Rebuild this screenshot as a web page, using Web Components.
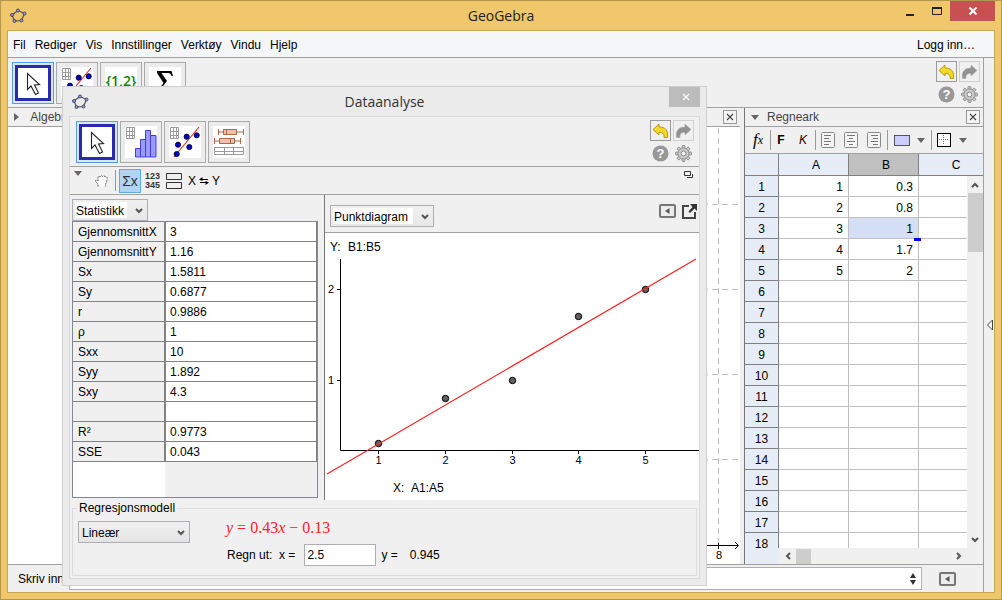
<!DOCTYPE html>
<html lang="nb">
<head>
<meta charset="utf-8">
<title>GeoGebra</title>
<style>
  html, body { margin: 0; height: 100%; }
  body { font: 12px/14px "Liberation Sans", Arial, sans-serif; color: #000; overflow: hidden; }
</style>
</head>
<body>
<gg-app></gg-app>
<script>
const BASE = `
  :host, *, *::before, *::after { box-sizing: border-box; }
  button { font: inherit; color: inherit; background: none; border: 0; padding: 0; margin: 0; display: inline-flex; align-items: center; justify-content: center; }
  svg { display: block; }
`;

function define(name, css, html, setup) {
  const tpl = document.createElement('template');
  tpl.innerHTML = `<style>${BASE}${css}</style>${html}`;
  customElements.define(name, class extends HTMLElement {
    constructor() {
      super();
      this.attachShadow({ mode: 'open' }).append(tpl.content.cloneNode(true));
    }
    connectedCallback() { if (setup) setup(this, this.shadowRoot); }
  });
}

/* ---------- icons: [width, height, svg body] ---------- */
const GRID = '<path d="M1.5 1.5h8v11h-8zM4.5 1.5v11M7.5 1.5v11M1.5 5.5h8M1.5 9.5h8" fill="none" stroke="#999"/>';
const DOT = (x, y) => `<circle cx="${x}" cy="${y}" r="2.6" fill="#0000d8" stroke="#000" stroke-width=".8"/>`;
const TEETH = [0, 45, 90, 135, 180, 225, 270, 315].map(a => `<rect x="7" y="0.5" width="3" height="4" rx="1" transform="rotate(${a} 8.5 8.5)"/>`).join('');
const ICONS = {
  logo: [17, 16, '<path d="M8 2.5L14.5 5.5L11.5 12.5L4.5 13L2 7Z" fill="none" stroke="#555" stroke-width="1.2"/><g fill="#9a9af0" stroke="#334" stroke-width=".8"><circle cx="8" cy="2.5" r="1.5"/><circle cx="14.5" cy="5.5" r="1.5"/><circle cx="11.5" cy="12.5" r="1.5"/><circle cx="4.5" cy="13" r="1.5"/><circle cx="2" cy="7" r="1.5"/></g>'],
  arrow: [30, 30, '<path d="M9.500 5.500V21.500L13 18L17.500 26.500L20.500 25L16.500 17L21.500 16.500Z" fill="#fff" stroke="#222" stroke-width="1.1"/>'],
  histogram: [32, 32, GRID + '<path d="M10.500 31V22.500H15.500V13.500H20.500V4.500H25.500V9.500H31V31ZM15.500 22V31M20.500 13V31M25.500 9V31" fill="#9a9aff" stroke="#4040e0"/>'],
  regression: [32, 32, GRID + '<path d="M5 31L30 1" stroke="#f02020" stroke-width="1.1"/>' + DOT(17.7, 10.7) + DOT(27.7, 9.3) + DOT(9, 18.7) + DOT(20.3, 21) + DOT(7.7, 28)],
  boxplot: [32, 32, '<g fill="#f0c0a8" stroke="#b06840"><path d="M5.500 3v6M30.500 3v6M5.500 6h5M24 6h6.500M1.500 12v6M27.500 12v6M1.500 15h5M20 15h7"/><path d="M10.500 3.500h13v5h-13zM13.500 3.500v5M6.500 12.500h15v5h-15zM17.500 12.500v5"/></g><path d="M1.500 21.500h29v7h-29zM1.500 25.500h29M11.500 21.500v7M20.500 21.500v7" fill="#fff" stroke="#999"/>'],
  list: [32, 32, '<text x="16" y="19" text-anchor="middle" font-family="Open Sans" font-size="14" font-weight="600" fill="#0b870b">{1,2}</text>'],
  sum: [32, 32, '<path d="M8 4H22.500L24 9H22.500C22 7 21 6 19 6H12.500L18 14L11 23H20C22 23 23 22 24 20L22.500 27H7.500V25.500L14.500 16L8 6Z" fill="#000"/>'],
  undo: [17, 16, '<path d="M1 6.500L7 1V4C13 4 16.500 7 15.500 14.500H12C12.500 11 10.500 9 7 9.500V12Z" fill="#f3d827" stroke="#b89a10"/>'],
  redo: [17, 16, '<path d="M16 6.500L10 1V4C4 4 .5 7 1.500 14.500H5C4.500 11 6.500 9 10 9.500V12Z" fill="#929292" stroke="#aaa" stroke-width=".6"/>'],
  help: [17, 17, '<circle cx="8.500" cy="8.500" r="8" fill="#989898"/><text x="8.500" y="13" text-anchor="middle" font-family="Liberation Sans" font-weight="bold" font-size="13" fill="#fff">?</text>'],
  gear: [17, 17, `<g fill="#c4c4c4" stroke="#8c8c8c" stroke-width=".9">${TEETH}<circle cx="8.500" cy="8.500" r="5.500"/></g><circle cx="8.500" cy="8.500" r="4.800" fill="#c8c8c8"/><circle cx="8.500" cy="8.500" r="2.400" fill="#f4f4f4" stroke="#8c8c8c"/>`],
  close: [8, 8, '<path d="M1 1L7 7M7 1L1 7" stroke="currentColor" stroke-width="1.1"/>'],
  closeBold: [10, 10, '<path d="M1.500 1.500L8.500 8.500M8.500 1.500L1.500 8.500" stroke="currentColor" stroke-width="2"/>'],
  minimize: [8, 8, '<path d="M0 5h8v2H0z" fill="#222"/>'],
  maximize: [10, 8, '<path d="M.5 1v6.500h9V1" fill="none" stroke="#222"/><path d="M0 0h10v2H0z" fill="#222"/>'],
  right: [5, 8, '<path d="M0 0L5 4L0 8Z" fill="#666"/>'],
  down: [8, 5, '<path d="M0 0H8L4 5Z" fill="#666"/>'],
  hand: [15, 14, '<path d="M4 12.500V10L1.500 7.500Q1 6 3 6.500L4 7V3.500Q4.500 1.500 6 3Q7.500 .5 8.500 2.500Q10.500 .5 11 3Q13.500 2 13 5.500Q13 8 11.500 10V12.500" fill="#fff" stroke="#555" stroke-dasharray="2 1"/>'],
  rows: [16, 16, '<path d="M.5 .5h15v6H.5zM.5 9.500h15v6H.5z" fill="none" stroke="#333"/>'],
  swap: [10, 8, '<path d="M2 2.500H9M1 5.500H8" stroke="#000"/><path d="M0 2.500L3.500 0V4ZM10 5.500L6.500 4V8Z"/>'],
  windows: [10, 8, '<path d="M.5 .5h6v4h-6zM3 6.500H8.500V3" fill="none" stroke="#333"/>'],
  toggle: [17, 14, '<rect x="1" y="1" width="15" height="12" rx="1" fill="#ececec" stroke="#777" stroke-width="2"/><path d="M10.500 4V10L6 7Z" fill="#555"/>'],
  export: [15, 15, '<path d="M7 2H1V14H13V8" fill="none" stroke="#444" stroke-width="2"/><path d="M8 0H15V7L12.500 4.500L8 9L6.500 7.500L10.500 3Z" fill="#333"/>'],
  alignL: [14, 16, '<rect x=".5" y=".5" width="13" height="15" rx="1" fill="#f4f4f4" stroke="#888"/><path d="M3 3.500h7M3 6.500h5M3 9.500h7M3 12.500h5" stroke="#777"/>'],
  alignC: [14, 16, '<rect x=".5" y=".5" width="13" height="15" rx="1" fill="#f4f4f4" stroke="#888"/><path d="M3 3.500h8M5 6.500h4M3 9.500h8M5 12.500h4" stroke="#777"/>'],
  alignR: [14, 16, '<rect x=".5" y=".5" width="13" height="15" rx="1" fill="#f4f4f4" stroke="#888"/><path d="M4 3.500h7M6 6.500h5M4 9.500h7M6 12.500h5" stroke="#777"/>'],
  fill: [16, 11, '<rect x=".5" y=".5" width="15" height="10" fill="#ccf" stroke="#555"/>'],
  borders: [14, 14, '<rect x=".5" y=".5" width="13" height="13" fill="#fff" stroke="#000" stroke-width="1"/><path d="M6.500 2v10M2 6.500h10" stroke="#777" stroke-dasharray="1 1"/>'],
  spinner: [6, 12, '<path d="M0 5L3 0L6 5ZM0 7L3 12L6 7Z" fill="#333"/>'],
  chevron: [8, 6, '<path d="M1 1L4 4L7 1" fill="none" stroke="#555" stroke-width="2"/>'],
  chevronUp: [8, 6, '<path d="M1 5L4 2L7 5" fill="none" stroke="#555" stroke-width="2"/>'],
  chevronLeft: [6, 8, '<path d="M5 1L2 4L5 7" fill="none" stroke="#555" stroke-width="2"/>'],
  chevronRight: [6, 8, '<path d="M1 1L4 4L1 7" fill="none" stroke="#555" stroke-width="2"/>'],
  perspective: [6, 12, '<path d="M5.500 1V11L.5 6Z" fill="#fff" stroke="#444"/>']
};
define('gg-icon', ':host { display: block; flex: none; }', '<div id="box"></div>', (el, root) => {
  const [w, h, body] = ICONS[el.getAttribute('name')];
  root.getElementById('box').innerHTML = `<svg width="${w}" height="${h}" viewBox="0 0 ${w} ${h}" aria-hidden="true">${body}</svg>`;
});

/* ---------- large tool button ---------- */
define('gg-tool', `
  :host { display: block; flex: none; }
  button { width: 42px; height: 42px; border: 1px solid #aaa; background: #ececec; }
  span { display: grid; place-items: center; width: 32px; height: 32px; background: #fff; }
  :host([selected]) button { border-color: #569de5; background: #d3e8fa; }
  :host([selected]) span { width: 36px; height: 36px; border: 3px solid #2a2aaa; }
`, '<button type="button"><span><slot></slot></span></button>',
  (el, root) => root.querySelector('button').setAttribute('aria-label', el.getAttribute('label')));

/* ---------- undo / redo / help / settings ---------- */
define('gg-actions', `
  :host { display: grid; grid-template-columns: 21px 21px; grid-auto-rows: 21px; gap: 2px; flex: none; }
  .u { border: 1px solid #999; }
  .r { border: 1px solid #d0d0d0; }
`, `
  <button class="u" type="button" aria-label="Angre"><gg-icon name="undo"></gg-icon></button>
  <button class="r" type="button" aria-label="Gjør om"><gg-icon name="redo"></gg-icon></button>
  <button type="button" aria-label="Hjelp"><gg-icon name="help"></gg-icon></button>
  <button type="button" aria-label="Innstillinger"><gg-icon name="gear"></gg-icon></button>
`);

/* ---------- menu bar ---------- */
define('gg-menu', `
  :host { display: block; background: #f5f6f7; border-bottom: 1px solid #a0a0a0; flex: none; }
  nav { display: flex; align-items: center; gap: 9px; height: 26px; padding: 2px 19px 0 5px; }
  .login { margin-left: auto; }
`, `<nav>
  <button type="button">Fil</button><button type="button">Rediger</button><button type="button">Vis</button>
  <button type="button">Innstillinger</button><button type="button">Verktøy</button>
  <button type="button">Vindu</button><button type="button">Hjelp</button>
  <button type="button" class="login">Logg inn…</button>
</nav>`);

/* ---------- view panel with a header strip ---------- */
define('gg-panel', `
  :host { display: flex; flex-direction: column; min-width: 0; min-height: 0; }
  header { display: flex; align-items: center; height: 19px; padding: 0 3px 0 6px; gap: 8px; border-bottom: 1px solid #a0a0a0; color: #444; flex: none; }
  .x { width: 14px; height: 14px; margin-left: auto; border: 1px solid #999; background: #f4f4f4; }
  .body { flex: 1; min-height: 0; display: flex; flex-direction: column; background: #fff; overflow: hidden; }
`, `<header><slot name="mark"></slot><slot name="title"></slot><button class="x" type="button" aria-label="Lukk"><gg-icon name="close"></gg-icon></button></header><div class="body"><slot></slot></div>`);

/* ---------- graphics view ---------- */
define('gg-graphics', `
  :host { display: flex; justify-content: flex-end; height: 100%; overflow: hidden; }
  svg { flex: none; }
`, `<svg width="600" height="437" viewBox="-560 0 600 437" font-family="Liberation Sans" font-size="11">
  <g stroke="#c0c0c0" stroke-dasharray="6 4"><path d="M18.500 1V420"/><path d="M38 77.500H-560M38 162.500H-560M38 247.500H-560M38 332.500H-560"/></g>
  <path d="M-560 418.500H38M18.500 416V422M35 415L38.500 418.500L35 422" fill="none" stroke="#000"/>
  <text x="19" y="432" text-anchor="middle">8</text>
</svg>`);

/* ---------- spreadsheet ---------- */
define('gg-sheet', `
  :host { display: flex; flex-direction: column; flex: 1; min-height: 0; background: #f0f0f0; }
  .bar { display: flex; align-items: center; height: 27px; border-bottom: 1px solid #a0a0a0; padding-left: 8px; flex: none; }
  .bar > * { flex: none; }
  .sep { width: 1px; height: 20px; background: #999; }
  .gap { margin-left: 2px; }
  .fx { width: 17px; font: italic 17px/20px "Liberation Serif", serif; justify-content: flex-start; }
  .fx small { font-size: 12px; }
  .b { font-weight: bold; width: 20px; } .i { font-style: italic; width: 24px; }
  .a { width: 23px; } .tri { width: 16px; margin-right: 2px; }
  .grid { flex: 1; min-height: 0; display: grid; grid-template-columns: 1fr 16px; grid-template-rows: 1fr 16px; position: relative; }
  .clip { overflow: hidden; grid-column: 1 / 3; grid-row: 1; min-height: 0; }
  table { border-collapse: separate; border-spacing: 0; table-layout: fixed; width: 244px; background: #fff; }
  th, td { height: 21px; padding: 1px 0 0; border-right: 1px solid #c0c0c0; border-bottom: 1px solid #c0c0c0; font-weight: normal; line-height: 14px; }
  td { text-align: right; padding-right: 5px; }
  th { background: #e6edf7; border-color: #808080; text-align: center; }
  thead th { height: 22px; padding: 0 0 0 5px; }
  thead th.on { background: #c0c0c0; }
  td.on { background: #d4def4; position: relative; }
  td.on::after { content: ""; position: absolute; right: -3px; bottom: -3px; width: 7px; height: 3px; background: #00f; z-index: 1; }
  .v { grid-column: 2; grid-row: 1; margin-top: 22px; background: #f0f0f0; display: flex; flex-direction: column; align-items: center; position: relative; z-index: 2; }
  .v button, .h button { width: 17px; height: 17px; flex: none; }
  .v i { width: 15px; height: 59px; background: #cdcdcd; }
  .v button:last-child { margin-top: auto; }
  .h { grid-column: 1 / 3; grid-row: 2; display: flex; align-items: center; padding-right: 16px; }
  .h b { width: 34px; height: 16px; background: #e6edf7; flex: none; }
  .h i { width: 15px; height: 15px; background: #cdcdcd; }
  .h button:last-child { margin-left: auto; }
`, `<div class="bar">
    <button class="fx" type="button" aria-label="Formellinje">f<small>x</small></button><span class="sep"></span>
    <button class="b" type="button">F</button><button class="i" type="button">K</button><span class="sep"></span>
    <button class="a" type="button" aria-label="Venstrejuster"><gg-icon name="alignL"></gg-icon></button>
    <button class="a" type="button" aria-label="Midtstill"><gg-icon name="alignC"></gg-icon></button>
    <button class="a" type="button" aria-label="Høyrejuster"><gg-icon name="alignR"></gg-icon></button><span class="sep gap"></span>
    <button class="a gap" type="button" aria-label="Bakgrunnsfarge"><gg-icon name="fill"></gg-icon></button><button class="tri" type="button" aria-label="Velg farge"><gg-icon name="down"></gg-icon></button><span class="sep"></span>
    <button class="a" type="button" aria-label="Kantlinjer"><gg-icon name="borders"></gg-icon></button><button class="tri" type="button" aria-label="Velg kantlinje"><gg-icon name="down"></gg-icon></button>
  </div>
  <div class="grid">
    <div class="clip"><table><colgroup><col style="width:34px"><col style="width:70px"><col style="width:70px"><col style="width:70px"></colgroup>
      <thead><tr><th></th><th scope="col">A</th><th scope="col" class="on">B</th><th scope="col">C</th></tr></thead><tbody></tbody></table></div>
    <div class="v"><button type="button" aria-label="Opp"><gg-icon name="chevronUp"></gg-icon></button><i></i><button type="button" aria-label="Ned"><gg-icon name="chevron"></gg-icon></button></div>
    <div class="h"><b></b><button type="button" aria-label="Venstre"><gg-icon name="chevronLeft"></gg-icon></button><i></i><button type="button" aria-label="Høyre"><gg-icon name="chevronRight"></gg-icon></button></div>
  </div>`, (el, root) => {
  const ys = ['0.3', '0.8', '1', '1.7', '2'];
  root.querySelector('tbody').innerHTML = Array.from({ length: 18 }, (_, i) =>
    `<tr><th scope="row">${i + 1}</th><td>${i < 5 ? i + 1 : ''}</td><td${i === 2 ? ' class="on"' : ''}>${ys[i] || ''}</td><td></td></tr>`).join('');
});

/* ---------- drop-down ---------- */
define('gg-select', `
  :host { display: block; flex: none; position: relative; height: 22px; }
  select { appearance: none; width: 100%; height: 22px; margin: 0; padding: 1px 20px 0 3px; border: 1px solid #adadb3; border-radius: 0; font: inherit; color: #000; background: linear-gradient(#f0f0f0, #e4e4e4); }
  :host([editor]) select { background: linear-gradient(#fff, #fff) 2px 2px / calc(100% - 22px) 16px no-repeat, linear-gradient(#f0f0f0, #e8e8e8); }
  gg-icon { position: absolute; right: 5px; top: 9px; pointer-events: none; }
`, '<select></select><gg-icon name="chevron"></gg-icon>', (el, root) => {
  const s = root.querySelector('select');
  s.setAttribute('aria-label', el.getAttribute('label'));
  s.innerHTML = `<option>${el.getAttribute('value')}</option>`;
});

/* ---------- statistics table ---------- */
define('gg-stats', `
  :host { display: block; flex: 1; min-height: 0; overflow: hidden; border: 1px solid #828790; background: linear-gradient(90deg, #fff 92px, #f0f0f0 0); }
  table { border-collapse: separate; border-spacing: 0; table-layout: fixed; width: 100%; }
  th, td { height: 20px; padding: 0 0 0 5px; font-weight: normal; text-align: left; border: 0 solid #828282; border-bottom-width: 1px; border-right-width: 1px; white-space: nowrap; }
  th { width: 92px; background: #f0f0f0; }
  td { padding-left: 4px; background: #fff; border-left-width: 1px; }
`, '<table><tbody></tbody></table>', (el, root) => {
  root.querySelector('tbody').innerHTML = [['GjennomsnittX', '3'], ['GjennomsnittY', '1.16'], ['Sx', '1.5811'], ['Sy', '0.6877'], ['r', '0.9886'], ['ρ', '1'], ['Sxx', '10'], ['Syy', '1.892'], ['Sxy', '4.3'], ['', ''], ['R²', '0.9773'], ['SSE', '0.043']]
    .map(([k, v]) => `<tr><th scope="row">${k}</th><td>${v}</td></tr>`).join('');
});

/* ---------- scatter plot ---------- */
define('gg-scatter', ':host { display: block; flex: 1; min-height: 0; background: #fff; overflow: hidden; }', '<div id="plot"></div>', (el, root) => {
  const xs = [53.5, 120.5, 187.5, 253.5, 320.5];
  const ys = [210.5, 165.5, 147.5, 83.5, 56.5];
  root.getElementById('plot').innerHTML = `<svg width="374" height="267" viewBox="0 0 374 267" font-family="Liberation Sans" font-size="11">
    <path d="M15.500 26V217.500H374M12 56.500h3M12 147.500h3${xs.map(x => `M${x} 218v3`).join('')}" fill="none" stroke="#000"/>
    ${xs.map((x, i) => `<circle cx="${x}" cy="${ys[i]}" r="3.200" fill="#606060" stroke="#000"/>`).join('')}
    <path d="M2 241L371 26" stroke="#ff2020" stroke-width="1.200"/>
    ${xs.map((x, i) => `<text x="${x}" y="231" text-anchor="middle">${i + 1}</text>`).join('')}
    <text x="3" y="60">2</text><text x="3" y="151">1</text>
    <g font-size="12"><text x="5" y="18">Y:</text><text x="23" y="18">B1:B5</text><text x="68" y="259">X:</text><text x="86" y="259">A1:A5</text></g>
  </svg>`;
});

/* ---------- data analysis dialog ---------- */
define('gg-dialog', `
  :host { display: flex; flex-direction: column; background: #ebebeb; border: 1px solid #cfcfcf; padding: 0 6px 6px; }
  .title { display: grid; grid-template-columns: 31px 1fr 31px; height: 29px; align-items: center; flex: none; }
  .title gg-icon { margin-left: 3px; }
  h2 { margin: 0; text-align: center; font: 14px/20px "Open Sans", "Noto Sans", sans-serif; color: #333; }
  .x { align-self: start; width: 31px; height: 20px; background: #bcbcbc; color: #fff; }
  .content { flex: 1; min-height: 0; display: flex; flex-direction: column; border: 1px solid #dadada; background: #f0f0f0; }
  .tools { display: flex; gap: 2px; height: 50px; padding: 4px 5px 0 6px; border-bottom: 1px solid #a0a0a0; flex: none; }
  gg-actions { margin: -1px 0 0 auto; }
  .style { display: flex; align-items: center; height: 28px; border-bottom: 1px solid #a0a0a0; flex: none; padding: 0 5px 0 4px; }
  .style .top { align-self: flex-start; margin-top: 4px; }
  .hand { margin: 0 6px 0 12px; }
  .sep { width: 1px; height: 21px; background: #999; margin-right: 3px; }
  .sx { width: 22px; height: 24px; border: 1px solid #60a8e8; background: #b0d4f4; font-size: 14px; color: #333; margin-right: 4px; }
  .n { font: bold 9px/9px "Liberation Sans", sans-serif; color: #333; width: 15px; margin-right: 6px; }
  .xy { gap: 3px; margin-left: 6px; }
  .main { display: flex; flex: 1; min-height: 0; }
  .left { width: 248px; padding: 4px 0 2px 2px; display: flex; flex-direction: column; margin-right: 6px; flex: none; }
  .left gg-select { width: 76px; }
  .right { flex: 1; min-width: 0; display: flex; flex-direction: column; border-left: 1px solid #777; }
  .head { display: flex; align-items: flex-start; gap: 6px; height: 38px; padding: 10px 2px 0 5px; border-bottom: 1px solid #a0a0a0; flex: none; }
  .head gg-select { width: 104px; margin-right: auto; }
  .head button { margin-top: -1px; }
  fieldset { flex: none; min-width: 0; height: 75px; margin: 1px 2px 2px; padding: 0 5px; border: 1px solid #dcdcdc; }
  legend { margin-left: -1px; padding: 0 2px; height: 14px; }
  .reg { display: grid; grid-template-columns: 148px auto; justify-content: start; padding-top: 6px; }
  .reg gg-select { width: 112px; }
  .eq { font: 16px/14px "Liberation Serif", serif; color: #f22; height: 22px; }
  .calc { grid-column: 2; display: flex; align-items: center; padding-left: 1px; margin-top: 1px; }
  label { white-space: pre; }
  input { width: 72px; height: 22px; margin: 0 5px 0 9px; padding: 0 2px; border: 1px solid #adadb3; font: inherit; }
  output { margin-left: 12px; }
`, `<div class="title"><gg-icon name="logo"></gg-icon><h2>Dataanalyse</h2><button class="x" type="button" aria-label="Lukk"><gg-icon name="close"></gg-icon></button></div>
  <div class="content">
    <div class="tools">
      <gg-tool selected label="Flytt"><gg-icon name="arrow"></gg-icon></gg-tool>
      <gg-tool label="Analyse av en variabel"><gg-icon name="histogram"></gg-icon></gg-tool>
      <gg-tool label="Regresjonsanalyse"><gg-icon name="regression"></gg-icon></gg-tool>
      <gg-tool label="Analyse av flere variabler"><gg-icon name="boxplot"></gg-icon></gg-tool>
      <gg-actions></gg-actions>
    </div>
    <div class="style">
      <gg-icon class="top" name="down"></gg-icon><gg-icon class="hand" name="hand"></gg-icon><span class="sep"></span>
      <button class="sx" type="button">Σx</button><button class="n" type="button">123<br>345</button>
      <button type="button" aria-label="Vis to diagram"><gg-icon name="rows"></gg-icon></button>
      <button class="xy" type="button"><span>X</span><gg-icon name="swap"></gg-icon><span>Y</span></button>
      <gg-icon class="top" name="windows" style="margin-left:auto"></gg-icon>
    </div>
    <div class="main">
      <div class="left"><gg-select editor label="Tabell" value="Statistikk"></gg-select><gg-stats></gg-stats></div>
      <div class="right">
        <div class="head"><gg-select editor label="Diagram" value="Punktdiagram"></gg-select>
          <button type="button" aria-label="Vis innstillinger"><gg-icon name="toggle"></gg-icon></button>
          <button type="button" aria-label="Eksporter"><gg-icon name="export"></gg-icon></button></div>
        <gg-scatter></gg-scatter>
      </div>
    </div>
    <fieldset><legend>Regresjonsmodell</legend>
      <div class="reg"><gg-select label="Regresjonsmodell" value="Lineær"></gg-select>
        <div class="eq"><i>y</i> = 0.43<i>x</i> − 0.13</div>
        <div class="calc"><label for="x">Regn ut:  x =</label><input id="x" value="2.5"><span>y =</span><output for="x">0.945</output></div>
      </div>
    </fieldset>
  </div>`);

/* ---------- application window ---------- */
define('gg-app', `
  :host { display: flex; flex-direction: column; height: 100vh; position: relative; background: #f0c76a; border: 1px solid #b3974f; padding: 0 6px 6px; }
  .title { display: grid; grid-template-columns: 1fr auto 1fr; align-items: center; height: 29px; flex: none; }
  .title > gg-icon { margin-left: 3px; }
  h1 { margin: 0; font: 14px/20px "Open Sans", "Noto Sans", sans-serif; color: #222; }
  .ctl { display: flex; justify-content: flex-end; align-self: start; height: 20px; }
  .ctl button { width: 27px; }
  .ctl button:last-child { width: 45px; background: #c75050; color: #fff; }
  .ctl button:first-child { padding-top: 4px; }
  .frame { flex: 1; min-height: 0; display: flex; flex-direction: column; border: 1px solid #c9a654; background: #f0f0f0; }
  .work { flex: 1; min-height: 0; display: flex; }
  .side { width: 11px; border-left: 1px solid #a0a0a0; display: flex; align-items: center; justify-content: flex-end; flex: none; padding-right: 1px; }
  .col { flex: 1; min-width: 0; display: flex; flex-direction: column; }
  .tools { display: flex; gap: 2px; height: 50px; padding: 4px 3px 0 4px; border-bottom: 1px solid #a0a0a0; flex: none; }
  gg-actions { margin: -1px 0 0 auto; }
  .views { flex: 1; min-height: 0; display: flex; border-bottom: 1px solid #a0a0a0; }
  .alg { width: 200px; flex: none; }
  .gfx { flex: 1; margin-right: 4px; }
  .sheet { width: 239px; flex: none; border-left: 1px solid #777; }
  .cmd { display: flex; align-items: center; height: 27px; flex: none; padding-left: 10px; }
  .cmd label { width: 51px; flex: none; }
  .field { flex: 1; height: 23px; display: flex; align-items: center; border: 1px solid #adadb3; background: #fff; padding-right: 5px; }
  .field input { flex: 1; min-width: 0; height: 20px; border: 0; padding: 0 4px; font: inherit; background: none; }
  .cmd > button { width: 61px; padding-right: 10px; }
  gg-dialog { position: absolute; left: 61px; right: 294px; top: 85px; bottom: 13px; z-index: 5; }
`, `<div class="title"><gg-icon name="logo"></gg-icon><h1>GeoGebra</h1>
    <div class="ctl"><button type="button" aria-label="Minimer"><gg-icon name="minimize"></gg-icon></button><button type="button" aria-label="Maksimer"><gg-icon name="maximize"></gg-icon></button><button type="button" aria-label="Lukk"><gg-icon name="closeBold"></gg-icon></button></div></div>
  <div class="frame">
    <gg-menu></gg-menu>
    <div class="work">
      <div class="col">
        <div class="tools">
          <gg-tool selected label="Flytt"><gg-icon name="arrow"></gg-icon></gg-tool>
          <gg-tool label="Regresjonsanalyse"><gg-icon name="regression"></gg-icon></gg-tool>
          <gg-tool label="Liste"><gg-icon name="list"></gg-icon></gg-tool>
          <gg-tool label="Sum"><gg-icon name="sum"></gg-icon></gg-tool>
          <gg-actions></gg-actions>
        </div>
        <div class="views">
          <gg-panel class="alg"><gg-icon slot="mark" name="right"></gg-icon><span slot="title">&nbsp;Algebrafelt</span></gg-panel>
          <gg-panel class="gfx"><span slot="title">Grafikkfelt</span><gg-graphics></gg-graphics></gg-panel>
          <gg-panel class="sheet"><gg-icon slot="mark" name="down"></gg-icon><span slot="title">Regneark</span><gg-sheet></gg-sheet></gg-panel>
        </div>
        <div class="cmd"><label for="cmd">Skriv inn:</label><div class="field"><input id="cmd" aria-label="Skriv inn"><gg-icon name="spinner"></gg-icon></div>
          <button type="button" aria-label="Vis kommandoliste"><gg-icon name="toggle"></gg-icon></button></div>
      </div>
      <div class="side"><gg-icon name="perspective"></gg-icon></div>
    </div>
  </div>
  <gg-dialog></gg-dialog>`);
</script>
</body>
</html>
